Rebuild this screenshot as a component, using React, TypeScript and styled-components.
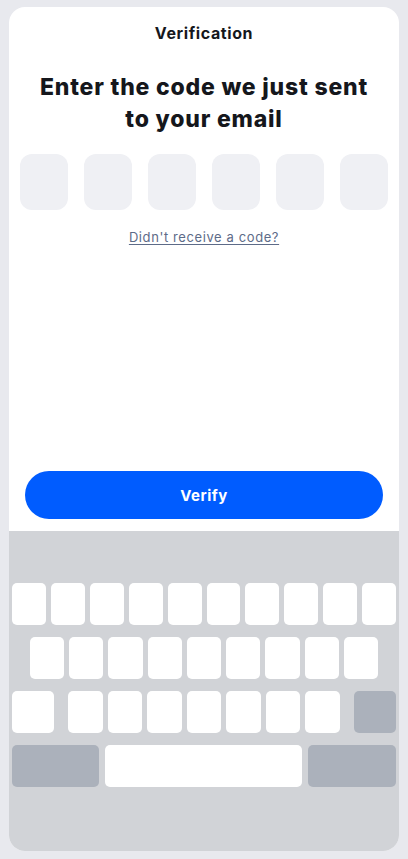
import React from "react";
import styled, { createGlobalStyle } from "styled-components";

const Global = createGlobalStyle`
  html, body { margin: 0; padding: 0; background: #e8e9ee; }
  body { font-family: "Inter", "Liberation Sans", sans-serif; }
  * { box-sizing: border-box; }
`;

const Page = styled.div`
  width: 408px;
  height: 859px;
  padding: 7px 9px 8px;
  display: flex;
`;

const Card = styled.div`
  flex: 1;
  background: #ffffff;
  border-radius: 16px;
  overflow: hidden;
  display: flex;
  flex-direction: column;
`;

const Content = styled.div`
  flex: 1;
  display: flex;
  flex-direction: column;
  align-items: center;
  padding: 14px 16px 12px;
`;

const Title = styled.div`
  font-size: 16px;
  font-weight: 700;
  color: #15171c;
  line-height: 24px;
  letter-spacing: 0.6px;
`;

const Headline = styled.h1`
  margin: 26px 0 0;
  font-size: 23px;
  font-weight: 800;
  line-height: 32px;
  color: #15171c;
  text-align: center;
  letter-spacing: 0.8px;
  width: 340px;
`;

const Boxes = styled.div`
  display: flex;
  gap: 16px;
  margin-top: 19px;
`;

const CodeBox = styled.div`
  width: 48px;
  height: 56px;
  border-radius: 12px;
  background: #eff0f4;
`;

const Link = styled.a`
  margin-top: 18px;
  font-size: 13px;
  line-height: 18px;
  color: #5d6b88;
  letter-spacing: 0.6px;
  text-decoration: underline;
  text-underline-offset: 2px;
`;

const Button = styled.button`
  margin-top: auto;
  width: 358px;
  height: 48px;
  border: none;
  border-radius: 24px;
  background: #005cff;
  color: #ffffff;
  font-family: inherit;
  font-size: 15px;
  font-weight: 700;
  letter-spacing: 0.5px;
`;

const Keyboard = styled.div`
  height: 320px;
  background: #d1d3d7;
  padding: 52px 3px 0;
  display: flex;
  flex-direction: column;
  gap: 12px;
`;

const Row = styled.div<{ $pad?: number; $gap?: number }>`
  display: flex;
  gap: ${(p) => p.$gap ?? 5}px;
  padding: 0 ${(p) => p.$pad ?? 0}px;
  height: 42px;
`;

const Key = styled.div<{ $w?: number; $dark?: boolean }>`
  ${(p) => (p.$w ? `width: ${p.$w}px; flex: none;` : `flex: 1;`)}
  height: 42px;
  border-radius: 5px;
  background: ${(p) => (p.$dark ? "#abb1bb" : "#ffffff")};
`;

const Group = styled.div`
  flex: 1;
  display: flex;
  gap: 5px;
`;

export default function App() {
  return (
    <>
      <Global />
      <Page>
        <Card>
          <Content>
            <Title>Verification</Title>
            <Headline>Enter the code we just sent to your email</Headline>
            <Boxes>
              {Array.from({ length: 6 }).map((_, i) => (
                <CodeBox key={i} />
              ))}
            </Boxes>
            <Link>Didn't receive a code?</Link>
            <Button>Verify</Button>
          </Content>
          <Keyboard>
            <Row>
              {Array.from({ length: 10 }).map((_, i) => (
                <Key key={i} />
              ))}
            </Row>
            <Row $pad={18}>
              {Array.from({ length: 9 }).map((_, i) => (
                <Key key={i} />
              ))}
            </Row>
            <Row $gap={14}>
              <Key $w={42} />
              <Group>
                {Array.from({ length: 7 }).map((_, i) => (
                  <Key key={i} />
                ))}
              </Group>
              <Key $w={42} $dark />
            </Row>
            <Row $gap={6}>
              <Key $w={87} $dark />
              <Key />
              <Key $w={88} $dark />
            </Row>
          </Keyboard>
        </Card>
      </Page>
    </>
  );
}
